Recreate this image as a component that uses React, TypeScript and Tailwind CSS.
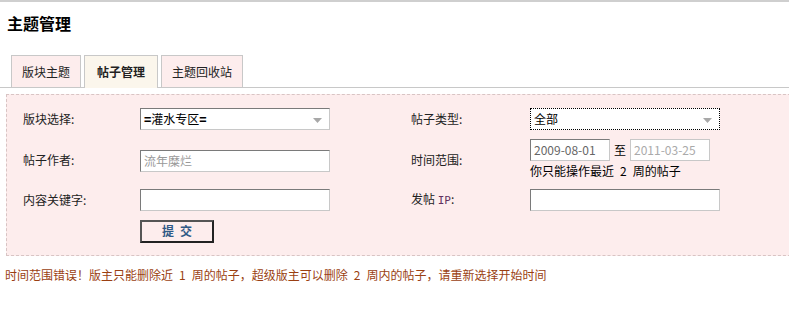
import React from "react";

const font = { fontFamily: '"Noto Sans CJK SC", "Noto Sans", sans-serif' };

function Arrow() {
  return (
    <svg width="9" height="5" viewBox="0 0 9 5" className="absolute right-[7px] top-[9px]">
      <path d="M0 0 H9 L4.5 5 Z" fill="#a8a8a8" />
    </svg>
  );
}

function Field({ value, w = "w-[190px]", gray = false }: { value?: string; w?: string; gray?: boolean }) {
  return (
    <div
      className={`${w} h-[22px] bg-white border border-t-[#7a7a7a] border-l-[#7a7a7a] border-r-[#c8c8c8] border-b-[#c8c8c8] px-[3px] leading-[20px] ${gray ? "text-[#999]" : "text-[#666]"}`}
    >
      {value}
    </div>
  );
}

export default function App() {
  return (
    <div className="w-[789px] h-[312px] bg-white text-[12px] text-[#222] overflow-hidden" style={font}>
      <div className="h-[2px] bg-[#cfcfcf]" />
      <h1 className="pl-[7px] pt-[10px] text-[16px] font-bold leading-[22px] text-black">主题管理</h1>

      <div className="mt-[21px] flex items-end gap-[3px] pl-[11px] border-b border-[#c8c8c8] h-[33px]">
        <div className="w-[70px] h-[32px] border border-b-0 border-[#c8c8c8] bg-[#fdeded] flex items-center justify-center">版块主题</div>
        <div className="w-[74px] h-[32px] border border-b-0 border-[#c8c8c8] bg-[#fbf6ec] flex items-center justify-center font-bold -mb-px h-[33px]">帖子管理</div>
        <div className="w-[82px] h-[32px] border border-b-0 border-[#c8c8c8] bg-[#fdeded] flex items-center justify-center">主题回收站</div>
      </div>

      <div className="ml-[6px] mt-[6px] w-[800px] border border-dashed border-[#d8c4c4] bg-[#fdeded] pt-[13px] pb-[13px] flex flex-col gap-[9px]">
        <div className="flex items-center h-[22px]">
          <div className="w-[133px] pl-[16px]">版块选择:</div>
          <div className="w-[271px]">
            <div className="relative w-[190px] h-[22px] bg-white border border-t-[#7a7a7a] border-l-[#7a7a7a] border-r-[#c8c8c8] border-b-[#c8c8c8] pl-[3px] leading-[20px] text-black">
              <b className="font-black">=</b>灌水专区<b className="font-black">=</b>
              <Arrow />
            </div>
          </div>
          <div className="w-[119px]">帖子类型:</div>
          <div className="relative w-[190px] h-[22px] bg-white border border-dotted border-black pl-[3px] leading-[20px] text-black">
            全部
            <Arrow />
          </div>
        </div>

        <div className="flex items-center h-[42px] -mb-px">
          <div className="w-[133px] pl-[16px]">帖子作者:</div>
          <div className="w-[271px] pt-[2px]">
            <Field value="流年糜烂" gray />
          </div>
          <div className="w-[119px]">时间范围:</div>
          <div className="flex flex-col">
            <div className="flex items-center">
              <Field value="2009-08-01" w="w-[80px]" />
              <span className="mx-[4px] text-black">至</span>
              <div className="w-[80px] h-[22px] bg-white border border-[#c8c8c8] px-[3px] leading-[20px] text-[#aaa]">2011-03-25</div>
            </div>
            <div className="leading-[20px] text-black">你只能操作最近{"\u2002"}2{"\u2002"}周的帖子</div>
          </div>
        </div>

        <div className="flex items-center h-[22px]">
          <div className="w-[133px] pl-[16px]">内容关键字:</div>
          <div className="w-[271px]">
            <Field />
          </div>
          <div className="w-[119px]">
            发帖 <span className="text-[#603060]" style={{ fontFamily: '"DejaVu Sans Mono", monospace', fontSize: "11px" }}>IP</span>:
          </div>
          <Field />
        </div>

        <div className="flex items-center h-[22px]">
          <div className="w-[133px]" />
          <button className="w-[74px] h-[23px] border-2 border-t-[#555] border-l-[#555] border-r-[#222] border-b-[#222] bg-[#fdeded] font-bold text-[#2f5a86] tracking-[6px] pl-[6px]">
            提交
          </button>
        </div>
      </div>

      <p className="pl-[5px] pt-[10px] text-[#9a3f12]">
        时间范围错误！版主只能删除近{"\u2002"}1{"\u2002"}周的帖子，超级版主可以删除{"\u2002"}2{"\u2002"}周内的帖子，请重新选择开始时间
      </p>
    </div>
  );
}
